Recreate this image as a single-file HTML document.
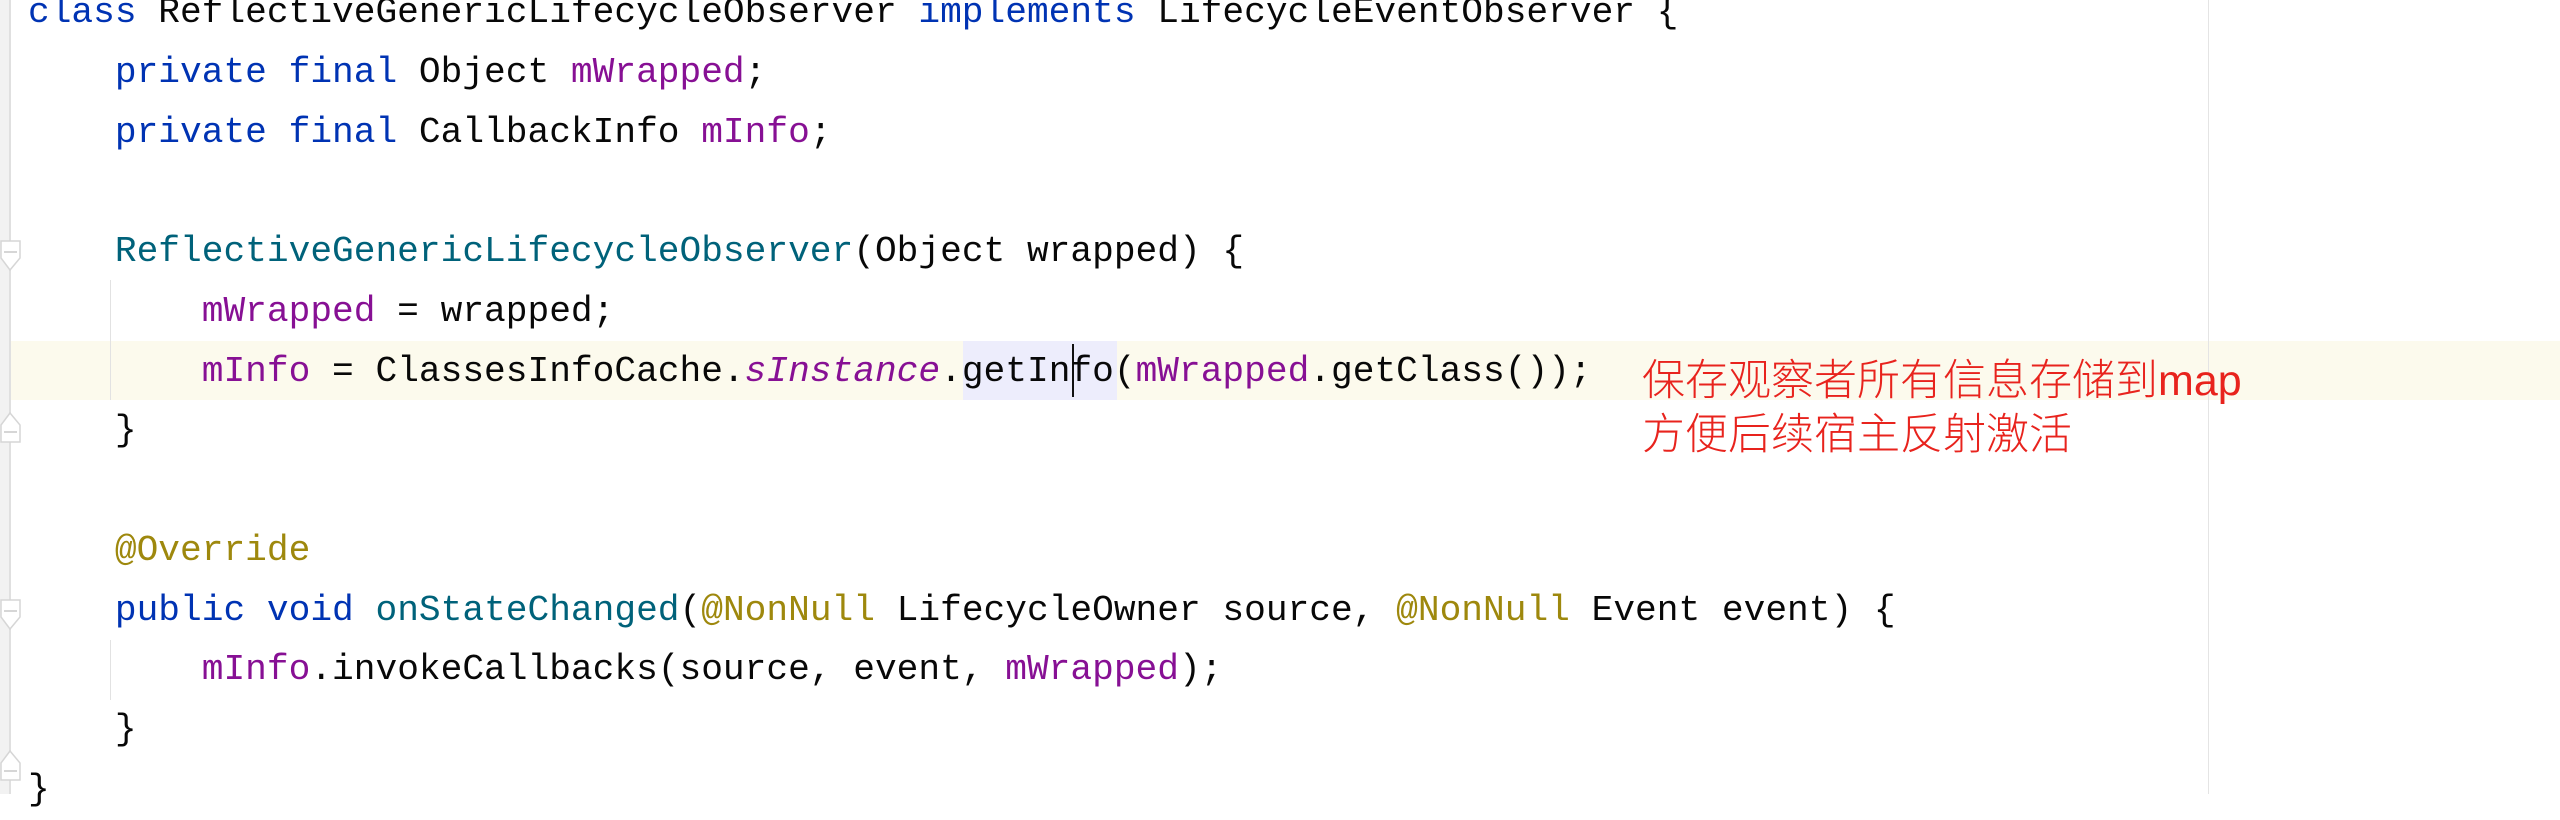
<!DOCTYPE html>
<html><head><meta charset="utf-8"><style>
html,body{margin:0;padding:0;}
body{width:2560px;height:794px;background:#fff;position:relative;overflow:hidden;}
.code{position:absolute;left:28px;top:-17px;font-family:"Liberation Mono",monospace;font-size:36.2px;line-height:59.75px;color:#080808;white-space:pre;margin:0;}
.k{color:#0033b3}.f{color:#871094}.m{color:#00627a}.a{color:#9e880d}.i{font-style:italic;color:#871094}
.note{position:absolute;left:1642px;font-family:"Liberation Sans","Noto Sans CJK SC",sans-serif;font-size:43px;color:#e8231d;font-weight:300;white-space:nowrap;}
</style></head><body>
<div style="position:absolute;left:0;top:341px;width:2560px;height:59px;background:#fcfaed"></div>
<div style="position:absolute;left:963px;top:341px;width:154px;height:59px;background:#ededfc"></div>
<div style="position:absolute;left:0;top:0;width:9px;height:794px;background:#f2f2f2"></div>
<div style="position:absolute;left:9px;top:0;width:2px;height:794px;background:#e0e0e0"></div>
<div style="position:absolute;left:2208px;top:0;width:1px;height:794px;background:#e4e4e4"></div>
<div style="position:absolute;left:110px;top:280px;width:1px;height:120px;background:#e2e2e2"></div>
<div style="position:absolute;left:110px;top:640px;width:1px;height:60px;background:#e2e2e2"></div>
<svg style="position:absolute;left:0;top:0" width="30" height="794">
<g fill="#fff" stroke="#d6d6d6" stroke-width="1.5">
<path d="M1 241 H20 V258 L10 270 L1 258 Z"/><path d="M1 442 H20 V425 L10 413 L1 425 Z"/>
<path d="M1 600 H20 V617 L10 629 L1 617 Z"/><path d="M1 780 H20 V763 L10 751 L1 763 Z"/>
</g>
<g stroke="#c8c8c8" stroke-width="1.5"><path d="M4 252 H17 M4 432 H17 M4 611 H17 M4 771 H17"/></g>
</svg>
<div style="position:absolute;left:1072px;top:344px;width:2px;height:53px;background:#111"></div>
<pre class="code"><span class="k">class</span> ReflectiveGenericLifecycleObserver <span class="k">implements</span> LifecycleEventObserver {
    <span class="k">private final</span> Object <span class="f">mWrapped</span>;
    <span class="k">private final</span> CallbackInfo <span class="f">mInfo</span>;

    <span class="m">ReflectiveGenericLifecycleObserver</span>(Object wrapped) {
        <span class="f">mWrapped</span> = wrapped;
        <span class="f">mInfo</span> = ClassesInfoCache.<span class="i">sInstance</span>.getInfo(<span class="f">mWrapped</span>.getClass());
    }

    <span class="a">@Override</span>
    <span class="k">public void</span> <span class="m">onStateChanged</span>(<span class="a">@NonNull</span> LifecycleOwner source, <span class="a">@NonNull</span> Event event) {
        <span class="f">mInfo</span>.invokeCallbacks(source, event, <span class="f">mWrapped</span>);
    }
}</pre>
<div class="note" style="top:346px">保存观察者所有信息存储到map</div>
<div class="note" style="top:400px">方便后续宿主反射激活</div>
</body></html>
